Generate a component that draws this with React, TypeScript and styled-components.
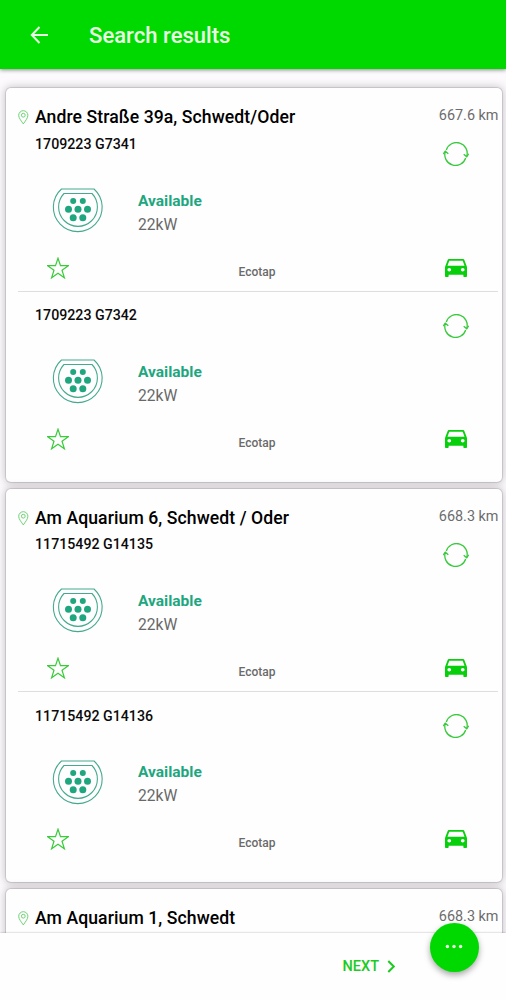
import React from "react";
import styled, { createGlobalStyle } from "styled-components";

const GlobalStyle = createGlobalStyle`
  * { box-sizing: border-box; }
  html, body { margin: 0; height: 100%; overflow: hidden; }
  body { font-family: Roboto, sans-serif; }
  svg { display: block; flex: none; }
`;

const Screen = styled.div`
  display: flex;
  flex-direction: column;
  height: 1000px;
  overflow: hidden;
  background: #fcfafc;
`;

const Header = styled.header`
  flex: none;
  display: flex;
  align-items: center;
  height: 69px;
  padding: 0 30px;
  background: #00d900;
  box-shadow: 0 1px 4px rgba(0, 0, 0, 0.45);
  z-index: 1;
`;

const HeaderTitle = styled.h1`
  margin: 0 0 0 40px;
  font-size: 22.1px;
  font-weight: 500;
  line-height: 30px;
  color: #e9ffe4;
`;

const List = styled.main`
  flex: 1;
  min-height: 0;
  display: flex;
  flex-direction: column;
  gap: 7.2px;
  padding: 19.4px 4.5px 0 6px;
  overflow: hidden;
`;

const Card = styled.section`
  flex: none;
  height: 393.2px;
  padding-left: 12px;
  border-radius: 5px;
  background: #fefefe;
  box-shadow: 0 0 0 1px rgba(110, 100, 110, 0.2), 0 0 8px 1px rgba(60, 50, 60, 0.28);
`;

const CardHead = styled.div`
  display: flex;
  align-items: flex-start;
  height: 32px;
  padding: 17px 3px 0 0;
`;

const Address = styled.h2`
  flex: 1;
  margin: 0 0 0 6px;
  font-size: 17.6px;
  font-weight: 500;
  letter-spacing: 0.08px;
  line-height: 24px;
  white-space: nowrap;
  color: #000;
`;

const Distance = styled.span`
  padding-top: 1px;
  font-size: 14.4px;
  line-height: 20px;
  color: #6c6c6c;
`;

const Connector = styled.article`
  display: flex;
  flex-direction: column;
  height: 171.3px;
  margin-right: 3.5px;
  padding-bottom: 11px;
  border-bottom: 1px solid #dedede;

  &:last-child { border-bottom-color: transparent; }
`;

const IdLine = styled.div`
  display: flex;
  justify-content: space-between;
  align-items: flex-start;
  height: 65px;
  padding: 14.6px 29px 0 17px;
`;

const ConnectorId = styled.span`
  font-size: 14.2px;
  font-weight: 500;
  line-height: 18px;
  color: #0b0b0b;
`;

const IconSlot = styled.span`
  display: block;
  padding-top: 7.5px;
`;

const StatusLine = styled.div`
  display: flex;
  align-items: center;
  height: 52px;
  padding: 0.6px 0 0 34px;
  gap: 34px;
`;

const Status = styled.div`
  display: flex;
  flex-direction: column;
  padding-top: 4px;
`;

const Availability = styled.strong`
  font-size: 15.5px;
  font-weight: 700;
  line-height: 23px;
  color: #1fa67f;
`;

const Power = styled.span`
  font-size: 15.6px;
  line-height: 24px;
  color: #686868;
`;

const ActionLine = styled.div`
  display: grid;
  grid-template-columns: 1fr auto 1fr;
  align-items: center;
  height: 24px;
  margin-top: 19.2px;
  padding: 0 31px 0 29px;
`;

const Operator = styled.span`
  padding-top: 8px;
  font-size: 12px;
  font-weight: 500;
  line-height: 16px;
  color: #6a6a6a;
`;

const End = styled.span`
  justify-self: end;
`;

const Footer = styled.footer`
  flex: none;
  display: flex;
  position: relative;
  height: 67px;
  padding: 21.5px 0 0 342.5px;
  background: #fefefe;
  box-shadow: 0 0 2px rgba(0, 0, 0, 0.3);
`;

const NextButton = styled.button`
  display: flex;
  align-items: center;
  gap: 8px;
  height: 24px;
  padding: 0;
  border: 0;
  background: none;
  font: 500 14.5px/24px Roboto, sans-serif;
  color: #1bcb20;
`;

const MoreButton = styled.button`
  position: absolute;
  top: -10px;
  right: 27.5px;
  display: flex;
  justify-content: center;
  width: 49px;
  height: 49px;
  padding: 21px 0 0;
  border: 0;
  border-radius: 50%;
  background: #00d900;
  box-shadow: 0 3px 6px rgba(0, 0, 0, 0.35);
`;

const BackIcon = () => (
  <svg width="19" height="18" viewBox="0 0 19 18" fill="none" stroke="#e9ffe4" strokeWidth="2">
    <path d="M18 9H2M9.500 1L1.800 9l7.700 8" />
  </svg>
);

const PinIcon = () => (
  <svg width="11" height="24" viewBox="0 0 11 24" fill="none" stroke="#5fce66" strokeWidth="0.9">
    <path d="M5.300 18.900C3.600 16.300.7 13.200.7 10.300a4.600 4.600 0 0 1 9.200 0c0 2.900-2.900 6-4.600 8.600z" />
    <circle cx="5.300" cy="10.200" r="1.900" />
  </svg>
);

const RefreshIcon = () => (
  <svg width="26" height="24" viewBox="0 0 26 24" fill="none" stroke="#38c93d" strokeWidth="1.3">
    <path d="M3.300 8A10.700 10.700 0 0 1 23.700 14.500M22.700 16A10.700 10.700 0 0 1 2.300 9.500" />
    <path d="M20.700 12.200l3 2.600 2-3M.3 12l2-2.800 3 2.600" />
  </svg>
);

const PlugIcon = () => (
  <svg width="52" height="46" viewBox="0 0 52 46" fill="none" stroke="#45a98e" strokeWidth="1.1">
    <path d="M9.500 1h32.500A24.400 24.400 0 1 1 9.500 1z" />
    <path d="M12 5.500h28a19.400 19.400 0 1 1-28 0z" />
    <g fill="#1fa67f" stroke="none">
      <circle cx="21.200" cy="13" r="3" />
      <circle cx="30.800" cy="13" r="3" />
      <circle cx="16.500" cy="21.300" r="3.500" />
      <circle cx="26" cy="21.300" r="3.500" />
      <circle cx="35.500" cy="21.300" r="3.500" />
      <circle cx="21.200" cy="29.700" r="3.500" />
      <circle cx="30.800" cy="29.700" r="3.500" />
    </g>
  </svg>
);

const StarIcon = () => (
  <svg width="22" height="22" viewBox="0 0 22 22" fill="none" stroke="#3bcb3b" strokeWidth="1.200">
    <path d="M11 1.200l2.500 7.500h7.800l-6.300 4.600 2.400 7.500-6.400-4.600-6.400 4.600L7 13.300.7 8.700h7.800z" />
  </svg>
);

const CarIcon = () => (
  <svg width="22" height="18" viewBox="3 4 18 16" preserveAspectRatio="none" fill="#08cf0c">
    <path d="M18.920 5.010C18.720 4.420 18.160 4 17.500 4h-11c-.66 0-1.210.42-1.420 1.010L3 11v8c0 .55.45 1 1 1h1c.55 0 1-.45 1-1v-1h12v1c0 .55.45 1 1 1h1c.55 0 1-.45 1-1v-8l-2.080-5.990zM6.500 15c-.83 0-1.500-.67-1.500-1.500S5.670 12 6.500 12s1.500.67 1.500 1.500S7.330 15 6.500 15zm11 0c-.83 0-1.500-.67-1.500-1.500s.67-1.500 1.500-1.500 1.500.67 1.500 1.500-.67 1.500-1.500 1.500zM5 10l1.500-4.500h11L19 10H5z" />
  </svg>
);

const ChevronIcon = () => (
  <svg width="9" height="13" viewBox="0 0 9 13" fill="none" stroke="#1bcb20" strokeWidth="2">
    <path d="M1.300 1l5.500 5.500-5.500 5.500" />
  </svg>
);

const DotsIcon = () => (
  <svg width="18" height="5" viewBox="0 0 18 5" fill="#e9ffe4">
    <circle cx="2.400" cy="2.500" r="1.700" />
    <circle cx="9" cy="2.500" r="1.700" />
    <circle cx="15.600" cy="2.500" r="1.700" />
  </svg>
);

const stations = [
  { address: "Andre Straße 39a, Schwedt/Oder", distance: "667.6 km", connectors: ["1709223 G7341", "1709223 G7342"] },
  { address: "Am Aquarium 6, Schwedt / Oder", distance: "668.3 km", connectors: ["11715492 G14135", "11715492 G14136"] },
  { address: "Am Aquarium 1, Schwedt", distance: "668.3 km", connectors: [] },
];

export default function App() {
  return (
    <Screen>
      <GlobalStyle />
      <Header>
        <BackIcon />
        <HeaderTitle>Search results</HeaderTitle>
      </Header>
      <List>
        {stations.map((station) => (
          <Card key={station.address}>
            <CardHead>
              <PinIcon />
              <Address>{station.address}</Address>
              <Distance>{station.distance}</Distance>
            </CardHead>
            {station.connectors.map((id) => (
              <Connector key={id}>
                <IdLine>
                  <ConnectorId>{id}</ConnectorId>
                  <IconSlot><RefreshIcon /></IconSlot>
                </IdLine>
                <StatusLine>
                  <PlugIcon />
                  <Status>
                    <Availability>Available</Availability>
                    <Power>22kW</Power>
                  </Status>
                </StatusLine>
                <ActionLine>
                  <StarIcon />
                  <Operator>Ecotap</Operator>
                  <End><CarIcon /></End>
                </ActionLine>
              </Connector>
            ))}
          </Card>
        ))}
      </List>
      <Footer>
        <NextButton>NEXT <ChevronIcon /></NextButton>
        <MoreButton aria-label="More"><DotsIcon /></MoreButton>
      </Footer>
    </Screen>
  );
}
